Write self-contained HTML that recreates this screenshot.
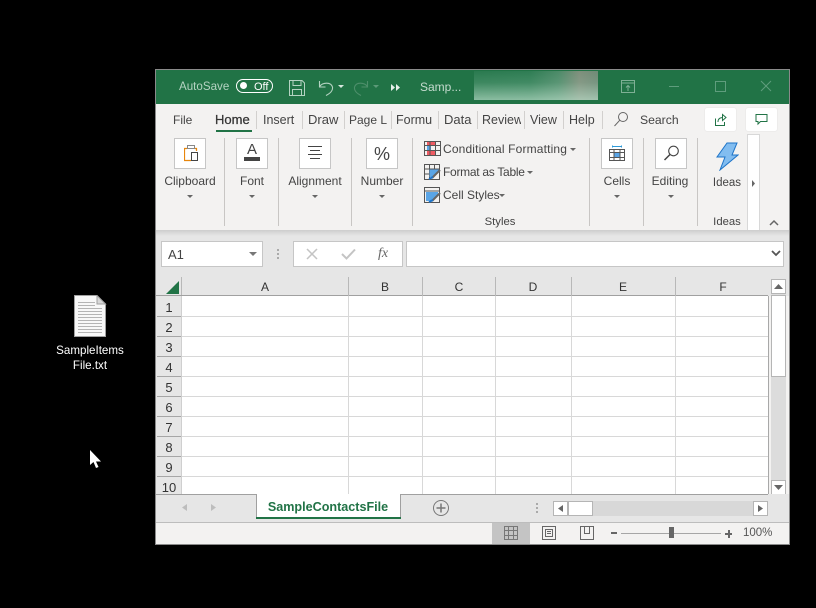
<!DOCTYPE html>
<html><head><meta charset="utf-8">
<style>
html,body{margin:0;padding:0;background:#000;width:816px;height:608px;overflow:hidden}
body{position:relative;font-family:"Liberation Sans",sans-serif;font-size:12px;color:#444}
div,span,svg{position:absolute}
.t{white-space:nowrap;line-height:16px}
.c{transform:translateX(-50%)}
.b{background:#fff;border:1px solid #c6c6c6;box-sizing:border-box}
.sep{width:1px;background:#c8c6c4}
.ts{width:1px;background:#d2d0ce;top:111px;height:18px}
.ar{width:0;height:0;border-left:3px solid transparent;border-right:3px solid transparent;border-top:3px solid #666}
.hl{left:157px;width:24px;height:1px;background:#a6a6a6}
.gl{left:182px;width:586px;height:1px;background:#d8d8d8}
.gv{top:296px;height:198px;width:1px;background:#d8d8d8}
.cv{top:277px;height:19px;width:1px;background:#b8b8b8}
.n{left:157px;width:24px;text-align:center;color:#333;line-height:20px;font-size:13px}
.h{top:279px;color:#333;line-height:16px}
.tb{font-size:12.500px;top:112px}
.sb{background:#fff;border:1px solid #b5b5b5;box-sizing:border-box}
</style></head><body>

<!-- desktop icon -->
<svg style="left:73px;top:295px" width="34" height="43" viewBox="0 0 34 43">
<path d="M1.500 .5H24L32.500 9V41.500H1.500Z" fill="#f8f8f8" stroke="#a0a0a0"/>
<path d="M24 .5V9H32.500Z" fill="#d8d8d8" stroke="#a0a0a0"/>
<path d="M5 7.500H22M5 10.500H22M5 13.500H29M5 16.500H29M5 19.500H29M5 22.500H29M5 25.500H29M5 28.500H29M5 31.500H29M5 34.500H29M5 37.500H29" stroke="#b4b4b4" stroke-width="1"/>
</svg>
<span class="t c" style="left:90px;top:343px;color:#fff;font-size:11.600px">SampleItems</span>
<span class="t c" style="left:90px;top:358px;color:#fff;font-size:11.600px">File.txt</span>
<svg style="left:89px;top:450px" width="13" height="19" viewBox="0 0 13 19"><path d="M1 0V15L4.500 12L7 18L9.500 17L7 11.500H12Z" fill="#fff"/></svg>

<!-- window -->
<div style="left:155px;top:69px;width:635px;height:476px;background:#8a8a8a"></div>
<div style="left:156px;top:70px;width:633px;height:474px;background:#f3f2f1"></div>
<!-- title bar -->
<div style="left:156px;top:70px;width:633px;height:34px;background:#217346"></div>
<span class="t" style="left:179px;top:79px;color:#b5d3c2;font-size:11.600px">AutoSave</span>
<div style="left:236px;top:79px;width:35px;height:12px;border:1.500px solid #fff;border-radius:8px"></div>
<div style="left:240px;top:82px;width:7px;height:7px;background:#fff;border-radius:50%"></div>
<span class="t" style="left:254px;top:79px;color:#fff;font-size:11px">Off</span>
<svg style="left:289px;top:80px" width="16" height="16" viewBox="0 0 16 16" fill="none" stroke="#b5d3c2"><path d="M.5 .5H13L15.500 3V15.500H.5Z"/><path d="M4 .5V5.500H12V.5M3.500 15.500V9.500H12.500V15.500"/></svg>
<svg style="left:317px;top:79px" width="18" height="18" viewBox="0 0 18 18" fill="none" stroke="#b5d3c2" stroke-width="1.100"><path d="M2.500 2V8H8.500M2.500 7.500C6 3 14 3 15.500 8C16 11.500 13 14.500 9 16.500"/></svg>
<div class="ar" style="left:338px;top:85px;border-top-color:#d8e8df"></div>
<svg style="left:352px;top:79px" width="18" height="18" viewBox="0 0 18 18" fill="none" stroke="#4e8f6b" stroke-width="1.100"><path d="M15.500 2V8H9.500M15.500 7.500C12 3 4 3 2.500 8C2 11.500 5 14.500 9 16.500"/></svg>
<div class="ar" style="left:373px;top:85px;border-top-color:#5c9a78"></div>
<svg style="left:391px;top:84px" width="9" height="7" viewBox="0 0 9 7"><path d="M0 0L4 3.500L0 7ZM5 0L9 3.500L5 7Z" fill="#e6f0ea"/></svg>
<span class="t" style="left:420px;top:79px;color:#c5dccf">Samp...</span>
<div style="left:474px;top:71px;width:124px;height:29px;background:linear-gradient(90deg,#2a7a4f 0%,#2f7d54 45%,#4c8a68 68%,#7f8f7c 85%,#6f8a76 100%)"></div>
<div style="left:474px;top:71px;width:124px;height:29px;background:linear-gradient(180deg,rgba(190,225,205,0) 0%,rgba(170,215,190,.15) 40%,rgba(190,225,205,.65) 100%)"></div>
<svg style="left:621px;top:80px" width="14" height="13" viewBox="0 0 14 13" fill="none" stroke="#7fb095"><path d="M.5 .5H13.500V12.500H.5ZM.5 3H13.500M7 11V5.500M5 7.500L7 5.500L9 7.500"/></svg>
<div style="left:669px;top:86px;width:10px;height:1px;background:#5f9d7d"></div>
<div style="left:715px;top:81px;width:9px;height:9px;border:1px solid #5f9d7d"></div>
<svg style="left:760px;top:80px" width="12" height="12" viewBox="0 0 12 12" stroke="#5f9d7d"><path d="M1 1L11 11M11 1L1 11"/></svg>

<!-- tabs -->
<span class="t" style="left:173px;top:112px;font-size:12px">File</span>
<span class="t" style="left:215px;top:112px;font-size:13px;color:#333;-webkit-text-stroke:.25px #333">Home</span>
<div style="left:216px;top:130px;width:36px;height:2px;background:#217346"></div>
<div class="ts" style="left:256px"></div><span class="t tb" style="left:263px">Insert</span>
<div class="ts" style="left:302px"></div><span class="t" style="left:308px;top:112px;font-size:13px">Draw</span>
<div class="ts" style="left:344px"></div><span class="t" style="left:349px;top:112px">Page L</span>
<div class="ts" style="left:391px"></div><span class="t tb" style="left:396px;width:38px;overflow:hidden">Formu</span>
<div class="ts" style="left:438px"></div><span class="t" style="left:444px;top:112px;font-size:13px">Data</span>
<div class="ts" style="left:477px"></div><span class="t tb" style="left:482px;width:39px;overflow:hidden">Review</span>
<div class="ts" style="left:524px"></div><span class="t tb" style="left:530px">View</span>
<div class="ts" style="left:563px"></div><span class="t tb" style="left:569px">Help</span>
<div class="ts" style="left:602px"></div>
<svg style="left:613px;top:111px" width="16" height="17" viewBox="0 0 16 17" fill="none" stroke="#666" stroke-width="1"><circle cx="10" cy="6" r="4.500"/><path d="M6.800 9.200L1.500 15"/></svg>
<span class="t" style="left:640px;top:112px;font-size:12.200px">Search</span>
<div style="left:705px;top:108px;width:31px;height:23px;background:#fff;border-radius:2px;box-shadow:0 0 1px #ccc"></div>
<svg style="left:714px;top:113px" width="14" height="14" viewBox="0 0 14 14" fill="none" stroke="#217346"><path d="M1.500 5.500V12.500H10.500V9M4 9C4 6 6 4.500 9 4.500M8.500 1.500L12 4.500L8.500 7.500Z"/></svg>
<div style="left:746px;top:108px;width:31px;height:23px;background:#fff;border-radius:2px;box-shadow:0 0 1px #ccc"></div>
<svg style="left:755px;top:113px" width="13" height="13" viewBox="0 0 13 13" fill="none" stroke="#217346"><path d="M1 1.500H12V8.500H5.500L3 11V8.500H1Z"/></svg>

<!-- ribbon groups -->
<div class="b" style="left:174px;top:138px;width:32px;height:31px"></div>
<svg style="left:184px;top:145px" width="15" height="17" viewBox="0 0 15 17" fill="none"><path d="M3 3.500H.5V15.500H7M10.500 3.500H12.500V6" stroke="#e8860c" stroke-width="1.200"/><path d="M3.500 3.500V.5H10.500V3.500Z" stroke="#888"/><path d="M7.500 7.500H13.500V15.500H7.500Z" stroke="#444" fill="#fff"/></svg>
<span class="t c" style="left:190px;top:173px">Clipboard</span><div class="ar" style="left:187px;top:195px"></div>
<div class="sep" style="left:224px;top:138px;height:88px"></div>

<div class="b" style="left:236px;top:138px;width:32px;height:31px"></div>
<span class="t c" style="left:252px;top:142px;font-size:15px;color:#444">A</span>
<div style="left:244px;top:157px;width:16px;height:4px;background:#444"></div>
<span class="t c" style="left:252px;top:173px">Font</span><div class="ar" style="left:249px;top:195px"></div>
<div class="sep" style="left:278px;top:138px;height:88px"></div>

<div class="b" style="left:299px;top:138px;width:32px;height:31px"></div>
<svg style="left:307px;top:146px" width="16" height="15" viewBox="0 0 16 15" stroke="#444"><path d="M1 .5H15M3 4.500H13M1 8.500H15M3 12.500H13"/></svg>
<span class="t c" style="left:315px;top:173px">Alignment</span><div class="ar" style="left:312px;top:195px"></div>
<div class="sep" style="left:351px;top:138px;height:88px"></div>

<div class="b" style="left:366px;top:138px;width:32px;height:31px"></div>
<span class="t c" style="left:382px;top:146px;font-size:18px;color:#444">%</span>
<span class="t c" style="left:382px;top:173px">Number</span><div class="ar" style="left:379px;top:195px"></div>
<div class="sep" style="left:412px;top:138px;height:88px"></div>

<svg style="left:424px;top:141px" width="17" height="15" viewBox="0 0 17 15" fill="none"><path d="M3 .5H11V4.500H3ZM3 9.500H11V14.500H3Z" fill="#ee5b63"/><path d="M3 4.500H7V9.500H3Z" fill="#5aa5e6"/><path d="M.5 .5H16.500V14.500H.5ZM.5 4.500H16.500M.5 9.500H16.500M6 .5V14.500M11.500 .5V14.500" stroke="#555"/></svg>
<span class="t" style="left:443px;top:141px;letter-spacing:.15px">Conditional Formatting</span><div class="ar" style="left:570px;top:148px"></div>
<svg style="left:424px;top:164px" width="17" height="16" viewBox="0 0 17 16" fill="none"><path d="M.5 .5H15.500V15.500H.5ZM.5 5H15.500M.5 10H10M5.500 .5V15.500M10.500 .5V7" stroke="#555"/><path d="M5.500 5.500H15V7L8 13H5.500Z" fill="#5aa5e6"/><path d="M16 6L8 14" stroke="#666" stroke-width="2"/><path d="M5 15L9 13" stroke="#1e74c8" stroke-width="2"/></svg>
<span class="t" style="left:443px;top:164px;letter-spacing:-.28px">Format as Table</span><div class="ar" style="left:527px;top:171px"></div>
<svg style="left:424px;top:187px" width="17" height="16" viewBox="0 0 17 16" fill="none"><path d="M.5 .5H15.500V15.500H.5ZM.5 4H15.500" stroke="#555"/><path d="M2 5H14V8L7 14H2Z" fill="#5aa5e6"/><path d="M16 6L8 14" stroke="#666" stroke-width="2"/><path d="M5 15L9 13" stroke="#1e74c8" stroke-width="2"/></svg>
<span class="t" style="left:443px;top:187px">Cell Styles</span><div class="ar" style="left:499px;top:194px"></div>
<span class="t c" style="left:500px;top:214px;font-size:11.300px">Styles</span>
<div class="sep" style="left:589px;top:138px;height:88px"></div>

<div class="b" style="left:601px;top:138px;width:32px;height:31px"></div>
<svg style="left:609px;top:145px" width="16" height="17" viewBox="0 0 16 17" fill="none"><path d="M5 7H11V12H5Z" fill="#5aa5e6"/><path d="M3.500 .5V2.500M12.500 .5V2.500M3.500 1.500H12.500" stroke="#2e9ad8"/><path d="M.5 4.500H15.500V15.500H.5ZM.5 7.500H15.500M.5 12.500H15.500M5 4.500V15.500M11 4.500V15.500" stroke="#555"/></svg>
<span class="t c" style="left:617px;top:173px">Cells</span><div class="ar" style="left:614px;top:195px"></div>
<div class="sep" style="left:643px;top:138px;height:88px"></div>

<div class="b" style="left:655px;top:138px;width:32px;height:31px"></div>
<svg style="left:663px;top:145px" width="17" height="17" viewBox="0 0 17 17" fill="none" stroke="#444" stroke-width="1.100"><circle cx="10.500" cy="6" r="4.800"/><path d="M7 9.500L1.500 15" stroke-width="1.500"/></svg>
<span class="t c" style="left:670px;top:173px">Editing</span><div class="ar" style="left:668px;top:195px"></div>
<div class="sep" style="left:697px;top:138px;height:88px"></div>

<svg style="left:715px;top:141px" width="24" height="30" viewBox="0 0 24 30"><path d="M12 2H22L17 14H23L5 29L10 16H2Z" fill="#82bdf0" stroke="#1e74c8" stroke-width="1"/></svg>
<span class="t c" style="left:727px;top:175px;font-size:11.500px">Ideas</span>
<span class="t c" style="left:727px;top:214px;font-size:11.300px">Ideas</span>
<div style="left:747px;top:134px;width:13px;height:97px;background:#fff;border:1px solid #d8d8d8;box-sizing:border-box"></div>
<svg style="left:751px;top:180px" width="5" height="7" viewBox="0 0 5 7"><path d="M1 0L4 3.500L1 7Z" fill="#666"/></svg>
<svg style="left:769px;top:219px" width="10" height="7" viewBox="0 0 10 7" fill="none" stroke="#666" stroke-width="1.500"><path d="M1 6L5 2L9 6"/></svg>

<!-- formula bar -->
<div style="left:156px;top:233px;width:633px;height:63px;background:#e6e6e6"></div>
<div style="left:156px;top:230px;width:633px;height:6px;background:linear-gradient(#cdcdcd,#e6e6e6)"></div>
<div class="b" style="left:161px;top:241px;width:102px;height:26px"></div>
<span class="t" style="left:168px;top:247px;font-size:13px;color:#444">A1</span>
<div class="ar" style="left:249px;top:252px;border-left-width:4px;border-right-width:4px;border-top:4px solid #777"></div>
<div style="left:277px;top:249px;width:2px;height:2px;background:#aaa;box-shadow:0 4px #aaa,0 8px #aaa"></div>
<div class="b" style="left:293px;top:241px;width:110px;height:26px"></div>
<svg style="left:306px;top:248px" width="12" height="12" viewBox="0 0 12 12" stroke="#c4c4c4" stroke-width="1.500"><path d="M1 1L11 11M11 1L1 11"/></svg>
<svg style="left:341px;top:248px" width="15" height="12" viewBox="0 0 15 12" fill="none" stroke="#c4c4c4" stroke-width="2"><path d="M1 6L5.500 10.500L14 1.500"/></svg>
<span class="t" style="left:378px;top:246px;font-family:'Liberation Serif',serif;font-style:italic;font-size:14px;color:#666">fx</span>
<div class="b" style="left:406px;top:241px;width:378px;height:26px"></div>
<svg style="left:771px;top:250px" width="10" height="7" viewBox="0 0 10 7" fill="none" stroke="#555" stroke-width="1.800"><path d="M1 1L5 5L9 1"/></svg>

<!-- grid -->
<div style="left:182px;top:296px;width:586px;height:198px;background:#fff"></div>
<div style="left:156px;top:296px;width:25px;height:198px;background:#e6e6e6"></div>
<div style="left:181px;top:277px;width:1px;height:19px;background:#b8b8b8"></div>
<div style="left:181px;top:296px;width:1px;height:198px;background:#cfcfcf"></div>
<div style="left:156px;top:295px;width:612px;height:1px;background:#a0a0a0"></div>
<div style="left:768px;top:296px;width:1px;height:198px;background:#a8a8a8"></div>
<svg style="left:166px;top:281px" width="13" height="13" viewBox="0 0 13 13"><path d="M13 0V13H0Z" fill="#217346"/></svg>
<div class="cv" style="left:348px"></div><div class="cv" style="left:422px"></div><div class="cv" style="left:495px"></div><div class="cv" style="left:571px"></div><div class="cv" style="left:675px"></div>
<div class="gv" style="left:348px"></div><div class="gv" style="left:422px"></div><div class="gv" style="left:495px"></div><div class="gv" style="left:571px"></div><div class="gv" style="left:675px"></div>
<span class="t c h" style="left:265px">A</span><span class="t c h" style="left:385px">B</span><span class="t c h" style="left:459px">C</span><span class="t c h" style="left:533px">D</span><span class="t c h" style="left:623px">E</span><span class="t c h" style="left:723px">F</span>
<div class="gl" style="top:316px"></div><div class="gl" style="top:336px"></div><div class="gl" style="top:356px"></div><div class="gl" style="top:376px"></div><div class="gl" style="top:396px"></div><div class="gl" style="top:416px"></div><div class="gl" style="top:436px"></div><div class="gl" style="top:456px"></div><div class="gl" style="top:476px"></div>
<div class="hl" style="top:316px"></div><div class="hl" style="top:336px"></div><div class="hl" style="top:356px"></div><div class="hl" style="top:376px"></div><div class="hl" style="top:396px"></div><div class="hl" style="top:416px"></div><div class="hl" style="top:436px"></div><div class="hl" style="top:456px"></div><div class="hl" style="top:476px"></div>
<div class="n" style="top:298px">1</div><div class="n" style="top:318px">2</div><div class="n" style="top:338px">3</div><div class="n" style="top:358px">4</div><div class="n" style="top:378px">5</div><div class="n" style="top:398px">6</div><div class="n" style="top:418px">7</div><div class="n" style="top:438px">8</div><div class="n" style="top:458px">9</div><div class="n" style="top:478px;height:16px;overflow:hidden">10</div>

<!-- vertical scrollbar -->
<div style="left:771px;top:279px;width:15px;height:216px;background:#dcdcdc"></div>
<div class="sb" style="left:771px;top:279px;width:15px;height:15px"></div>
<svg style="left:774px;top:284px" width="9" height="5" viewBox="0 0 9 5"><path d="M0 5L4.500 0L9 5Z" fill="#666"/></svg>
<div class="sb" style="left:771px;top:295px;width:15px;height:82px"></div>
<div class="sb" style="left:771px;top:480px;width:15px;height:15px"></div>
<svg style="left:774px;top:485px" width="9" height="5" viewBox="0 0 9 5"><path d="M0 0L4.500 5L9 0Z" fill="#666"/></svg>

<!-- sheet tabs -->
<div style="left:156px;top:494px;width:633px;height:28px;background:#e6e6e6"></div>
<div style="left:156px;top:494px;width:612px;height:1px;background:#a0a0a0"></div>
<div style="left:156px;top:522px;width:633px;height:1px;background:#bdbdbd"></div>
<svg style="left:182px;top:504px" width="5" height="7" viewBox="0 0 5 7"><path d="M5 0L0 3.500L5 7Z" fill="#bdbdbd"/></svg>
<svg style="left:211px;top:504px" width="5" height="7" viewBox="0 0 5 7"><path d="M0 0L5 3.500L0 7Z" fill="#bdbdbd"/></svg>
<div style="left:256px;top:494px;width:145px;height:24px;background:#fff;border-left:1px solid #a0a0a0;border-right:1px solid #a0a0a0;box-sizing:border-box"></div>
<div style="left:256px;top:517px;width:145px;height:2px;background:#217346"></div>
<span class="t c" style="left:328px;top:499px;font-weight:bold;color:#217346;font-size:12.600px">SampleContactsFile</span>
<svg style="left:432px;top:499px" width="18" height="18" viewBox="0 0 18 18" fill="none" stroke="#777"><circle cx="9" cy="9" r="7.500"/><path d="M9 4.500V13.500M4.500 9H13.500" stroke-width="1.500"/></svg>
<div style="left:536px;top:503px;width:2px;height:2px;background:#aaa;box-shadow:0 4px #aaa,0 8px #aaa"></div>
<div style="left:553px;top:501px;width:215px;height:15px;background:#d8d8d8"></div>
<div class="sb" style="left:553px;top:501px;width:15px;height:15px"></div>
<svg style="left:558px;top:505px" width="5" height="7" viewBox="0 0 5 7"><path d="M5 0L0 3.500L5 7Z" fill="#666"/></svg>
<div class="sb" style="left:568px;top:501px;width:25px;height:15px"></div>
<div class="sb" style="left:753px;top:501px;width:15px;height:15px"></div>
<svg style="left:758px;top:505px" width="5" height="7" viewBox="0 0 5 7"><path d="M0 0L5 3.500L0 7Z" fill="#666"/></svg>

<!-- status bar -->
<div style="left:492px;top:523px;width:38px;height:21px;background:#c4c4c4"></div>
<svg style="left:504px;top:526px" width="14" height="14" viewBox="0 0 14 14" fill="none" stroke="#777"><path d="M.5 .5H13.500V13.500H.5ZM.5 4.500H13.500M.5 9.500H13.500M4.500 .5V13.500M9.500 .5V13.500"/></svg>
<svg style="left:542px;top:526px" width="14" height="14" viewBox="0 0 14 14" fill="none" stroke="#666"><path d="M.5 .5H13.500V13.500H.5ZM3.500 3.500H10.500V10.500H3.500ZM5 5.500H9M5 7.500H9"/></svg>
<svg style="left:580px;top:526px" width="14" height="14" viewBox="0 0 14 14" fill="none" stroke="#666"><path d="M.5 .5H13.500V13.500H.5ZM4.500 .5V7.500H9.500V.5"/></svg>
<div style="left:611px;top:532px;width:6px;height:2px;background:#666"></div>
<div style="left:621px;top:533px;width:100px;height:1px;background:#a6a6a6"></div>
<div style="left:669px;top:527px;width:5px;height:11px;background:#666"></div>
<div style="left:725px;top:533px;width:7px;height:2px;background:#666"></div>
<div style="left:728px;top:530px;width:2px;height:8px;background:#666"></div>
<span class="t" style="left:743px;top:525px;font-size:11.500px;color:#555">100%</span>
</body></html>
